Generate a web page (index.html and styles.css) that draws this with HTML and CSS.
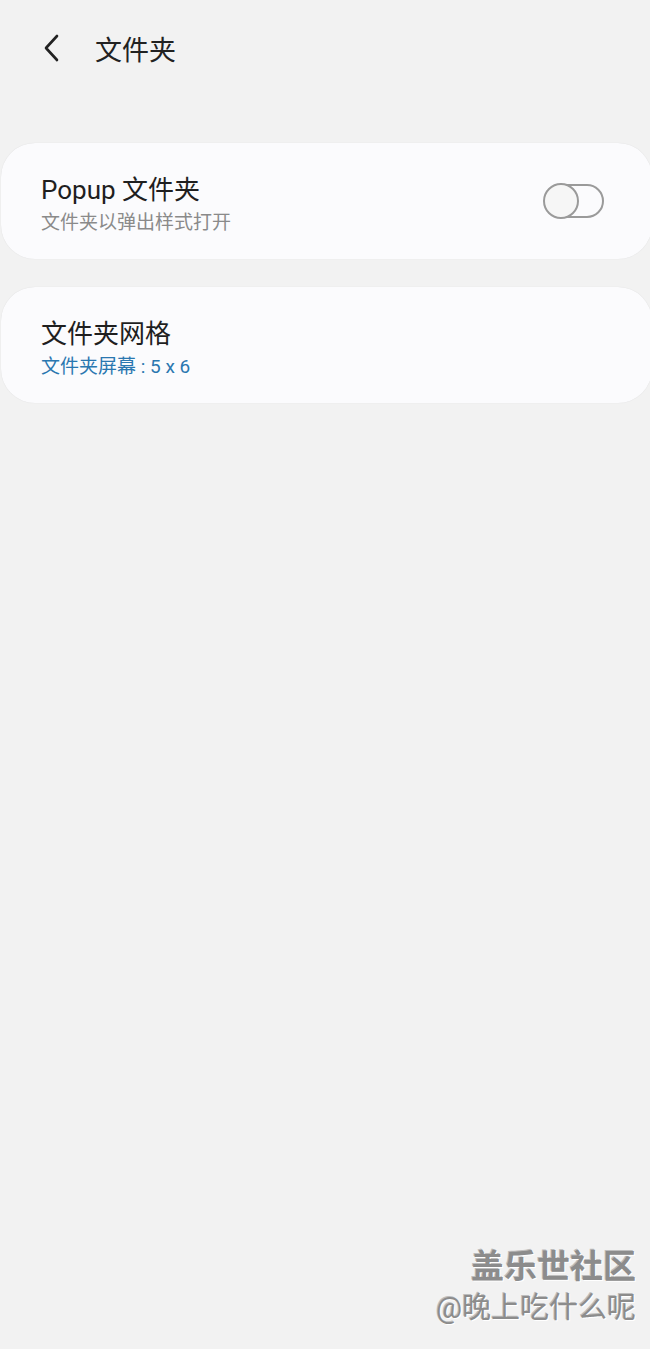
FILE: index.html
```html
<!DOCTYPE html>
<html lang="zh-CN">
<head>
  <meta charset="UTF-8">
  <title>文件夹</title>
  <link rel="stylesheet" href="styles.css">
</head>
<body>

<div class="header">
  <svg class="back" width="24" height="30" viewBox="0 0 24 30">
    <path d="M17 3 L6 15 L17 27" fill="none" stroke="#222" stroke-width="2.6" stroke-linecap="round" stroke-linejoin="round"/>
  </svg>
  <h1>文件夹</h1>
</div>

<div class="list">
  <div class="card">
    <div class="text">
      <div class="title">Popup 文件夹</div>
      <div class="sub">文件夹以弹出样式打开</div>
    </div>
    <div class="toggle"><span class="thumb"></span></div>
  </div>

  <div class="card">
    <div class="text">
      <div class="title">文件夹网格</div>
      <div class="sub blue">文件夹屏幕 : 5 x 6</div>
    </div>
  </div>
</div>

<div class="watermark">
  <div class="wm-big">盖乐世社区</div>
  <div class="wm-small">@晚上吃什么呢</div>
</div>

</body>
</html>
```

FILE: styles.css
```css
body {
  margin: 0;
  width: 650px;
  height: 1349px;
  background: #f2f2f2;
  font-family: Roboto, "Noto Sans CJK SC", sans-serif;
  position: relative;
  overflow: hidden;
}
.header {
  display: flex;
  align-items: center;
  height: 96px;
  padding-left: 40px;
}
.back {
  margin-right: 31px;
}
.header h1 {
  margin: 0;
  font-size: 27px;
  font-weight: 400;
  color: #222;
}
.list {
  display: flex;
  flex-direction: column;
  gap: 28px;
  padding: 47px 0 0 1px;
}
.card {
  display: flex;
  align-items: center;
  justify-content: space-between;
  height: 116px;
  box-sizing: border-box;
  margin-right: -2px;
  padding: 6px 48px 0 40px;
  background: #fbfbfd;
  border-radius: 34px;
  box-shadow: 0 0 1px rgba(0,0,0,0.12);
}
.title {
  font-size: 26px;
  color: #1f1f1f;
  line-height: 30px;
}
.sub {
  font-size: 19px;
  color: #8a8a8a;
  margin-top: 7px;
  line-height: 22px;
}
.sub.blue {
  color: #2a77b0;
}
.toggle {
  position: relative;
  width: 56px;
  height: 30px;
  margin-top: -6px;
  border: 2px solid #9a9a9a;
  border-radius: 17px;
  box-sizing: content-box;
}
.thumb {
  position: absolute;
  left: -3px;
  top: -3px;
  width: 32px;
  height: 32px;
  border: 2px solid #9a9a9a;
  border-radius: 50%;
  background: #f6f6f6;
}
.watermark {
  position: absolute;
  right: 14px;
  bottom: 24px;
  text-align: right;
  color: #8c8c8c;
  text-shadow: 1px 1px 0 #fff, -1px -1px 0 #bdbdbd;
}
.wm-big {
  font-size: 33px;
  font-weight: 700;
  line-height: 40px;
  margin-bottom: 4px;
}
.wm-small {
  font-size: 29px;
  line-height: 34px;
}
```
